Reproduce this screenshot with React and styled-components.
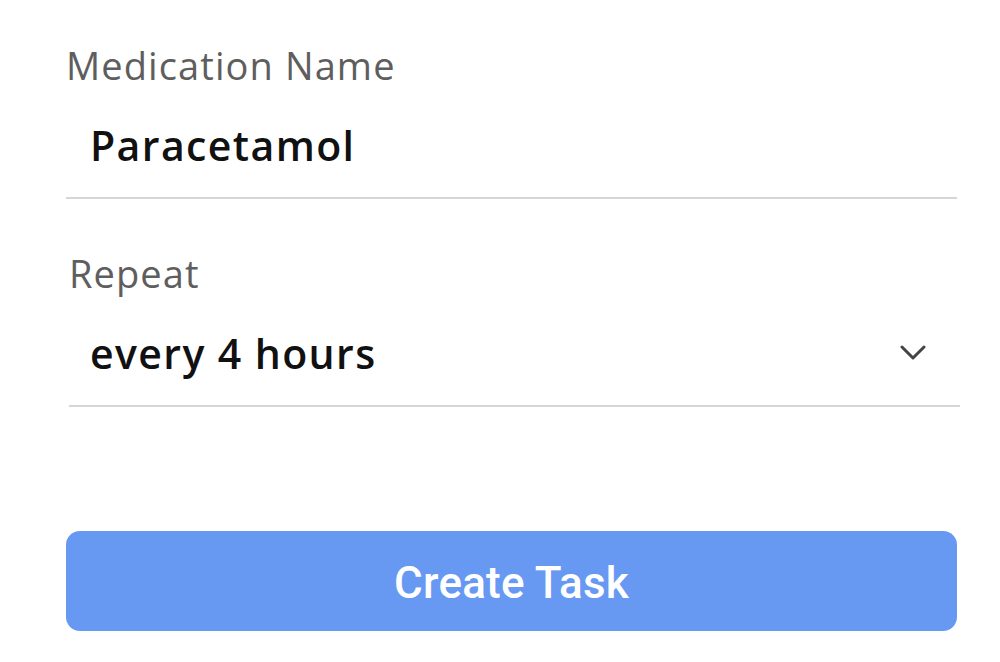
import React, { useState } from "react";
import styled, { createGlobalStyle } from "styled-components";

const GlobalStyle = createGlobalStyle`
  html, body {
    margin: 0;
    padding: 0;
    background: #ffffff;
  }
  body {
    font-family: "Open Sans", "Noto Sans", sans-serif;
  }
`;

const Form = styled.form`
  display: flex;
  flex-direction: column;
  width: 1000px;
  box-sizing: border-box;
  padding: 42px 43px 0 66px;
`;

const Field = styled.div`
  display: flex;
  flex-direction: column;
  margin-left: ${(p) => p.$shift || 0}px;
  margin-right: ${(p) => -(p.$shift || 0)}px;
  margin-top: ${(p) => p.$top || 0}px;
`;

const Label = styled.label`
  font-size: 38px;
  line-height: 46px;
  letter-spacing: 1.1px;
  color: #5e5e5e;
  font-weight: 400;
`;

const ValueRow = styled.div`
  display: flex;
  align-items: center;
  justify-content: space-between;
  margin-top: 32px;
  padding: 0 34px 27px ${(p) => p.$indent}px;
  border-bottom: 2px solid #d6d6d6;
`;

const Value = styled.span`
  font-size: 41px;
  line-height: 50px;
  font-weight: 600;
  letter-spacing: 1.4px;
  color: #111111;
`;

const Chevron = styled.svg`
  width: 26px;
  height: 18px;
  flex-shrink: 0;
`;

const Button = styled.button`
  margin-top: 124px;
  height: 100px;
  border: none;
  border-radius: 14px;
  background: #6799f3;
  color: #ffffff;
  font-family: Roboto, "Noto Sans", sans-serif;
  font-weight: 500;
  font-size: 44px;
  padding-top: 4px;
  letter-spacing: 0.2px;
  cursor: pointer;
`;

export default function App() {
  const [name] = useState("Paracetamol");
  const [repeat] = useState("every 4 hours");

  return (
    <>
      <GlobalStyle />
      <Form onSubmit={(e) => e.preventDefault()}>
        <Field>
          <Label>Medication Name</Label>
          <ValueRow $indent={24}>
            <Value>{name}</Value>
          </ValueRow>
        </Field>
        <Field $shift={3} $top={51}>
          <Label>Repeat</Label>
          <ValueRow $indent={21}>
            <Value>{repeat}</Value>
            <Chevron viewBox="0 0 26 18" fill="none">
              <path
                d="M2 3 L13 14 L24 3"
                stroke="#444"
                strokeWidth="3"
                strokeLinecap="round"
                strokeLinejoin="round"
              />
            </Chevron>
          </ValueRow>
        </Field>
        <Button type="submit">Create Task</Button>
      </Form>
    </>
  );
}
